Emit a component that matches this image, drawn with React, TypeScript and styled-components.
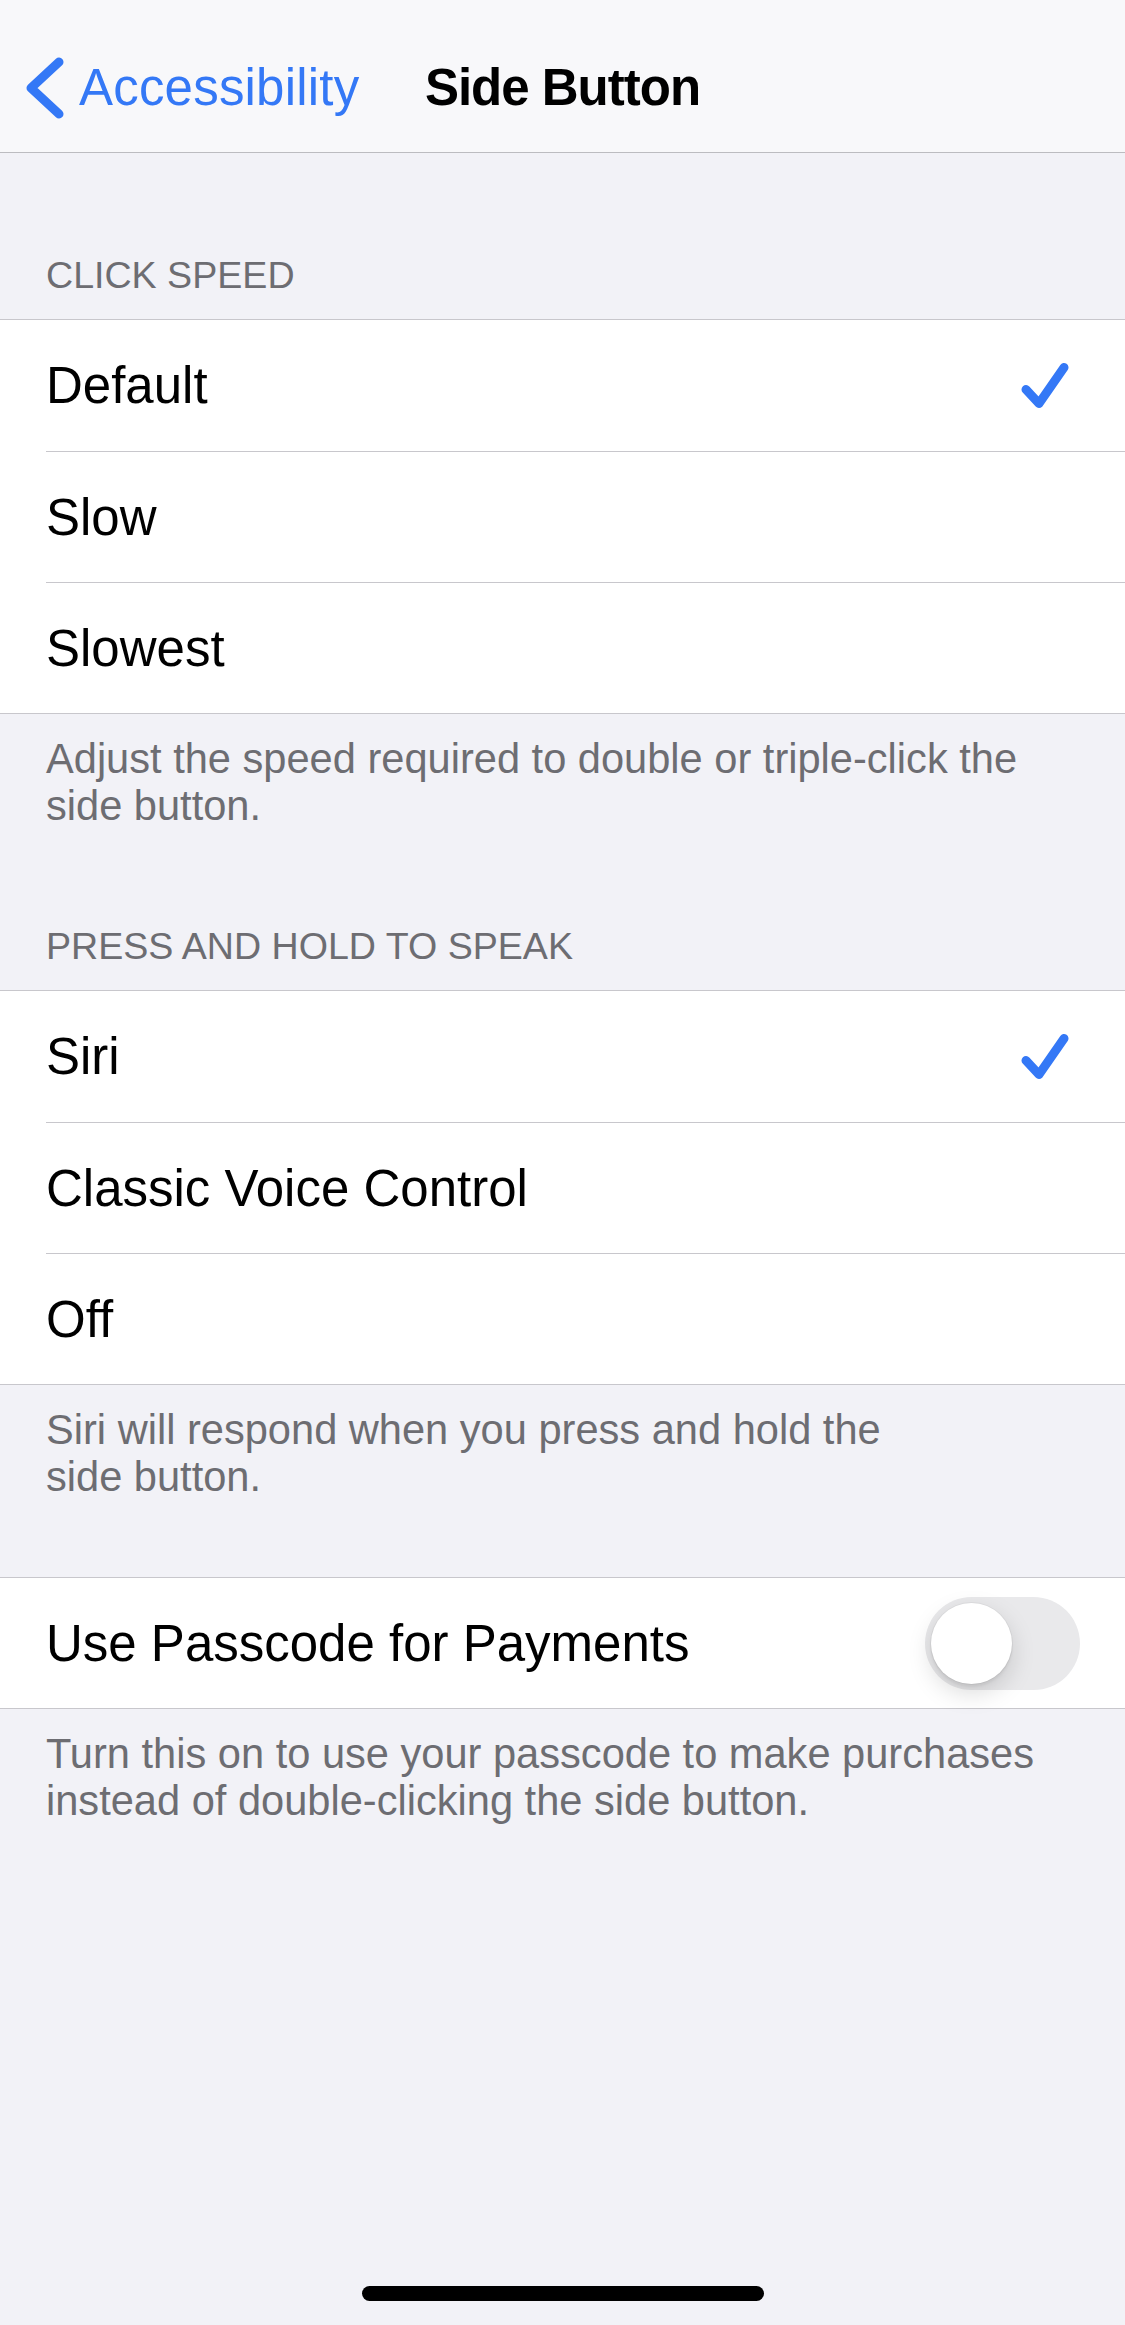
import React from "react";
import styled, { createGlobalStyle } from "styled-components";

const GlobalStyle = createGlobalStyle`
  html, body {
    margin: 0;
    padding: 0;
    background: #f2f2f7;
    font-family: "Liberation Sans", Arial, sans-serif;
    -webkit-font-smoothing: antialiased;
  }
  * { box-sizing: border-box; }
`;

const Page = styled.div`
  width: 1125px;
  min-height: 2325px;
  display: flex;
  flex-direction: column;
  background: #f2f2f7;
`;

const NavBar = styled.header`
  height: 153px;
  background: #f8f8fa;
  border-bottom: 1px solid #bcbcc0;
  display: grid;
  grid-template-columns: 1fr auto 1fr;
  align-items: center;
  padding-top: 23px;
`;

const BackButton = styled.button`
  justify-self: start;
  display: flex;
  align-items: center;
  gap: 15px;
  background: none;
  border: none;
  padding: 0 0 0 18px;
  margin: 0;
  font-family: inherit;
  font-size: 51px;
  letter-spacing: 0.2px;
  color: #3478f6;
  cursor: pointer;
`;

const Title = styled.h1`
  margin: 0;
  font-size: 51px;
  font-weight: 700;
  letter-spacing: -1px;
  color: #000;
`;

const Content = styled.main`
  padding-top: 5px;
  display: flex;
  flex-direction: column;
`;

const SectionHeader = styled.div`
  padding: 95px 46px 22px;
  font-size: 37.6px;
  line-height: 44px;
  color: #6d6d72;
  text-transform: uppercase;
`;

const Group = styled.div<{ $gap?: number }>`
  margin-top: ${(p) => p.$gap ?? 0}px;
  background: #fff;
  border-top: 1px solid #c8c7cc;
  border-bottom: 1px solid #c8c7cc;
`;

const Row = styled.div`
  padding-left: 46px;
  display: flex;
`;

const RowInner = styled.div<{ $last?: boolean; $height?: number; $pr?: number }>`
  flex: 1;
  height: ${(p) => (p.$height ?? 130) + (p.$last ? 0 : 1)}px;
  padding-right: ${(p) => p.$pr ?? 55}px;
  display: flex;
  align-items: center;
  justify-content: space-between;
  border-bottom: ${(p) => (p.$last ? "none" : "1px solid #c8c7cc")};
`;

const Label = styled.span`
  font-size: 51px;
  color: #000;
`;

const Footer = styled.p`
  margin: 0;
  padding: 21px 46px 0;
  font-size: 41.6px;
  line-height: 47px;
  color: #6d6d72;
`;

const Track = styled.div<{ $on?: boolean }>`
  position: relative;
  width: 155px;
  height: 93px;
  border-radius: 47px;
  background: ${(p) => (p.$on ? "#34c759" : "#e9e9eb")};
`;

const Knob = styled.div`
  position: absolute;
  top: 6px;
  left: 6px;
  width: 81px;
  height: 81px;
  border-radius: 50%;
  background: #fff;
  box-shadow: 0 9px 24px rgba(0, 0, 0, 0.15), 0 3px 3px rgba(0, 0, 0, 0.06),
    0 0 0 1px rgba(0, 0, 0, 0.04);
`;

const HomeIndicator = styled.div`
  margin-top: auto;
  margin-bottom: 24px;
  align-self: center;
  width: 402px;
  height: 15px;
  border-radius: 8px;
  background: #000;
`;

const Chevron = () => (
  <svg width="46" height="64" viewBox="0 0 46 64" fill="none">
    <path
      d="M41 6 L13 32 L41 58"
      stroke="#3478f6"
      strokeWidth="9"
      strokeLinecap="round"
      strokeLinejoin="round"
    />
  </svg>
);

const Check = () => (
  <svg width="50" height="50" viewBox="0 0 50 50" fill="none">
    <path
      d="M6 28.5 L19 42.5 L44 6.5"
      stroke="#3478f6"
      strokeWidth="9"
      strokeLinecap="round"
      strokeLinejoin="round"
    />
  </svg>
);

type Option = { label: string; checked?: boolean };

const OptionGroup = ({ options }: { options: Option[] }) => (
  <Group>
    {options.map((o, i) => (
      <Row key={o.label}>
        <RowInner $last={i === options.length - 1} $height={i === 0 ? 131 : 130}>
          <Label>{o.label}</Label>
          {o.checked && <Check />}
        </RowInner>
      </Row>
    ))}
  </Group>
);

export default function App() {
  return (
    <>
      <GlobalStyle />
      <Page>
        <NavBar>
          <BackButton>
            <Chevron />
            Accessibility
          </BackButton>
          <Title>Side Button</Title>
          <div />
        </NavBar>
        <Content>
          <SectionHeader>Click Speed</SectionHeader>
          <OptionGroup
            options={[
              { label: "Default", checked: true },
              { label: "Slow" },
              { label: "Slowest" },
            ]}
          />
          <Footer>
            Adjust the speed required to double or triple-click the
            <br />
            side button.
          </Footer>

          <SectionHeader>Press and Hold to Speak</SectionHeader>
          <OptionGroup
            options={[
              { label: "Siri", checked: true },
              { label: "Classic Voice Control" },
              { label: "Off" },
            ]}
          />
          <Footer>
            Siri will respond when you press and hold the
            <br />
            side button.
          </Footer>

          <Group $gap={77}>
            <Row>
              <RowInner $last $height={130} $pr={45}>
                <Label>Use Passcode for Payments</Label>
                <Track>
                  <Knob />
                </Track>
              </RowInner>
            </Row>
          </Group>
          <Footer>
            Turn this on to use your passcode to make purchases
            <br />
            instead of double-clicking the side button.
          </Footer>
        </Content>
        <HomeIndicator />
      </Page>
    </>
  );
}
